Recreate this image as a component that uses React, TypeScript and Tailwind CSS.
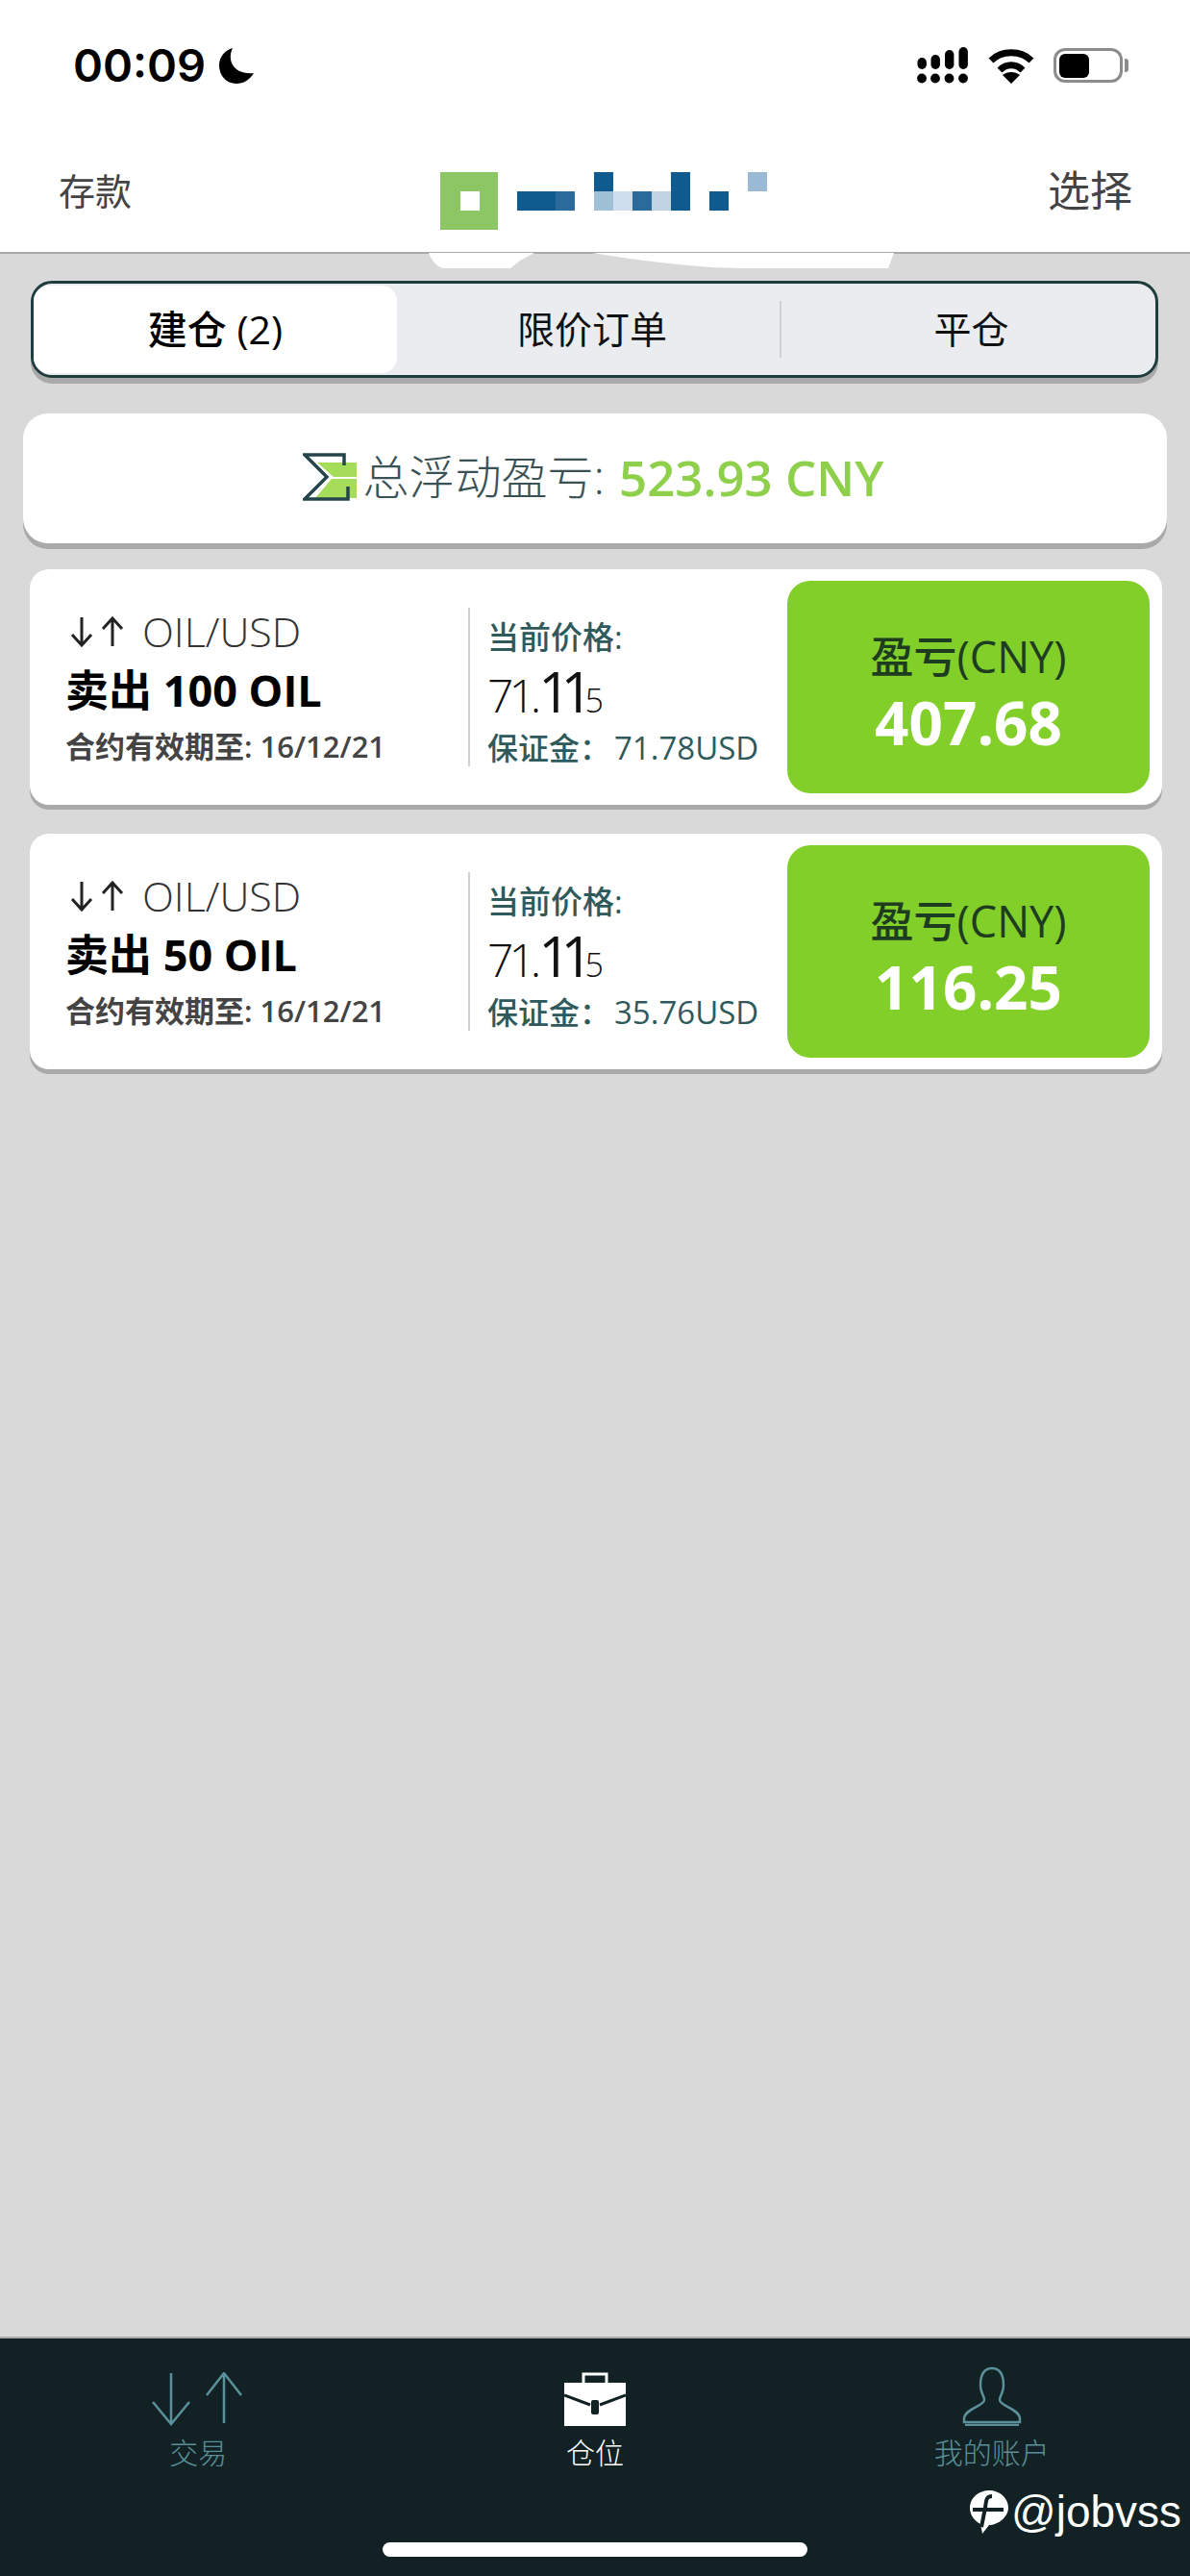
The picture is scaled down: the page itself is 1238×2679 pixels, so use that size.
import React from "react";

const positions = [
  { title: "卖出 100 OIL", margin: "71.78USD", pnl: "407.68" },
  { title: "卖出 50 OIL", margin: "35.76USD", pnl: "116.25" },
];

function SignalIcon() {
  return (
    <svg width="54" height="38" viewBox="0 0 54 38" fill="#000">
      <rect x="0.5" y="11" width="9.4" height="12" rx="4.7" />
      <rect x="14.5" y="8" width="9.4" height="15" rx="4.7" />
      <rect x="29" y="3" width="9.4" height="20" rx="4.7" />
      <rect x="43.5" y="0" width="9.4" height="23" rx="4.7" />
      <circle cx="5" cy="32.5" r="4.9" />
      <circle cx="19" cy="32.5" r="4.9" />
      <circle cx="33.5" cy="32.5" r="4.9" />
      <circle cx="48" cy="32.5" r="4.9" />
    </svg>
  );
}

function WifiIcon() {
  return (
    <svg width="48" height="37" viewBox="0 0 48 37" fill="none" stroke="#000" strokeWidth="7">
      <path d="M3 13 C14 2 34 2 45 13" />
      <path d="M12 23 C19 16 29 16 36 23" />
      <path d="M15 28 L24 37 L33 28 C28 24 20 24 15 28Z" fill="#000" stroke="none" />
    </svg>
  );
}

function BatteryIcon() {
  return (
    <div className="flex items-center gap-[2px]">
      <div className="flex h-[36px] w-[72px] items-center rounded-[12px] border-[3px] border-[#8c8c8c] pl-[3px]">
        <div className="h-[25px] w-[31px] rounded-[6px] bg-black" />
      </div>
      <div className="h-[14px] w-[4px] rounded-r-[3px] bg-[#8c8c8c]" />
    </div>
  );
}

function MoonIcon() {
  return (
    <svg width="37" height="37" viewBox="0 0 37 37" fill="#000">
      <path d="M14 0 C8 12 14 28 36 26 C32 33 25 37 18 37 C7 37 0 28 0 18 C0 9 6 2 14 0Z" />
    </svg>
  );
}

// Square brand mark followed by the blocky account name
function BrandMark() {
  const cells = [
    [80, 20, 40, 20, "#0f5a8f"],
    [120, 20, 20, 20, "#2a6b9c"],
    [160, 0, 20, 20, "#0f5a8f"],
    [160, 20, 20, 20, "#a0c0d8"],
    [180, 20, 20, 20, "#cfdeec"],
    [200, 20, 20, 20, "#2a6b9c"],
    [220, 20, 20, 20, "#c0d4e4"],
    [240, 0, 20, 40, "#0f5a8f"],
    [280, 20, 20, 20, "#0f5a8f"],
    [320, 0, 20, 20, "#9ab9d4"],
  ] as const;
  return (
    <svg width="340" height="60" viewBox="0 0 340 60">
      <rect width="60" height="60" fill="#8cc665" />
      <rect x="21" y="20" width="20" height="20" fill="#fff" />
      {cells.map(([x, y, w, h, c], i) => (
        <rect key={i} x={x} y={y} width={w} height={h} fill={c} />
      ))}
    </svg>
  );
}

function SigmaIcon() {
  return (
    <svg width="56" height="50" viewBox="0 0 56 50" className="shrink-0">
      <path d="M15 10 H56 V25 H32Z M30 27 H56 V47 H13Z" fill="#a5dc5a" />
      <path d="M43 13 V2 H2 L25 25 L2 48 H47 V35" fill="none" stroke="#23444a" strokeWidth="3.5" />
    </svg>
  );
}

function SmallArrows({ className }: { className: string }) {
  return (
    <svg viewBox="0 0 56 32" className={className} fill="none" stroke="#222" strokeWidth="3">
      <path d="M12 1 V30 M2 19 L12 30 L22 19" />
      <path d="M44 31 V2 M34 13 L44 2 L54 13" />
    </svg>
  );
}

function PositionCard({ title, margin, pnl }: { title: string; margin: string; pnl: string }) {
  return (
    <div className="flex h-[245px] items-stretch rounded-[20px] bg-white py-[12px] pr-[13px] shadow-[0_5px_0_#a9a9a9]">
      <div className="w-[456px] shrink-0 pl-[37px] pt-[31px]">
        <div className="flex h-[44px] items-center pl-[5px]">
          <SmallArrows className="h-[32px] w-[56px]" />
          <span className="ml-[19px] text-[43px] font-light leading-[44px] text-[#333]">OIL/USD</span>
        </div>
        <div className="mt-[14px] h-[50px] text-[45px] font-bold leading-[50px] text-black">{title}</div>
        <div className="mt-[13px] text-[31px] font-semibold leading-[40px] text-[#444]">合约有效期至: 16/12/21</div>
      </div>
      <div className="my-[28px] w-[2px] shrink-0 bg-[#cfcfcf]" />
      <div className="flex-1 pl-[18px] pt-[39px]">
        <div className="text-[33px] font-medium leading-[40px] text-[#2f5a5c]">当前价格:</div>
        <div className="mt-[8px] flex h-[56px] items-baseline leading-[56px] text-[#111]">
          <span className="text-[48px] font-light tracking-[-5px]">71.</span>
          <span className="ml-[2px] text-[58px] font-medium tracking-[-10px]">11</span>
          <span className="ml-[2px] text-[34px] font-light">5</span>
        </div>
        <div className="mt-[11px] flex items-center text-[33px] leading-[40px] text-[#2f5a5c]">
          <span className="w-[132px] text-[32px] font-medium">保证金：</span>
          <span className="font-normal">{margin}</span>
        </div>
      </div>
      <div className="flex w-[377px] shrink-0 flex-col items-center justify-center rounded-[24px] bg-[#82cf2a] pt-[8px]">
        <div className="text-[45px] font-medium leading-[54px] text-[#1e3d20]">盈亏(CNY)</div>
        <div className="mt-[10px] text-[62px] font-bold leading-[62px] text-white">{pnl}</div>
      </div>
    </div>
  );
}

function TradeIcon() {
  return (
    <svg width="96" height="56" viewBox="0 0 96 56" fill="none" stroke="#5b8f9a" strokeWidth="2.5">
      <path d="M20 1 V54 M1 31 L20 54 L39 31" />
      <path d="M75 53 V1 M57 24 L75 1 L93 24" />
    </svg>
  );
}

function BriefcaseIcon() {
  return (
    <svg width="64" height="56" viewBox="0 0 64 56">
      <path d="M20 11 V2 H44 V11" fill="none" stroke="#fff" strokeWidth="3" />
      <rect y="11" width="64" height="45" fill="#fff" />
      <path d="M0 24 L27 34 M64 24 L37 34" stroke="#122224" strokeWidth="3" />
      <rect x="28" y="29" width="8" height="15" rx="2" fill="#122224" />
    </svg>
  );
}

function PersonIcon() {
  return (
    <svg width="62" height="62" viewBox="0 0 62 62" fill="none" stroke="#5b8f9a" strokeWidth="2.5">
      <path d="M31 2 C21 2 19 11 19 20 C19 28 23 30 23 35 C23 41 3 44 2 54 L2 58 H60 L60 54 C59 44 39 41 39 35 C39 30 43 28 43 20 C43 11 41 2 31 2Z" />
      <path d="M3 61 H59" />
    </svg>
  );
}

function NavItem({ icon, label, active }: { icon: React.ReactNode; label: string; active?: boolean }) {
  return (
    <div className="flex flex-col items-center">
      <div className="flex h-[66px] items-end">{icon}</div>
      <div className={`mt-[10px] text-[30px] font-light leading-[36px] ${active ? "text-white" : "text-[#5a8f99]"}`}>
        {label}
      </div>
    </div>
  );
}

export default function App() {
  return (
    <div className="relative flex h-[2679px] w-[1238px] flex-col overflow-hidden bg-[#d9d9d9] font-['Open_Sans','Noto_Sans_CJK_SC',sans-serif]">
      <header className="h-[264px] shrink-0 border-b-2 border-[#a9a9a9] bg-white">
        <div className="flex items-center justify-between pl-[76px] pr-[64px] pt-[48px]">
          <div className="flex items-center gap-[14px]">
            <span className="font-['Inter',sans-serif] text-[47px] font-semibold leading-[40px] text-black">00:09</span>
            <MoonIcon />
          </div>
          <div className="flex items-center gap-[20px]">
            <SignalIcon />
            <WifiIcon />
            <BatteryIcon />
          </div>
        </div>
        <div className="mt-[60px] flex items-start justify-between pl-[61px] pr-[60px]">
          <span className="mt-[25px] text-[38px] font-normal leading-[50px] text-[#444]">存款</span>
          <div className="relative ml-[28px] mt-[31px]">
            <BrandMark />
            {/* white mask that runs past the header's lower edge */}
            <svg className="absolute left-[-12px] top-[84px]" width="490" height="20" viewBox="0 0 490 20" fill="#fff">
              <path d="M0 0 H484 L478 16 H330 C280 16 220 8 170 0 L110 0 L95 8 L85 16 H15 C8 14 3 8 0 0Z" />
            </svg>
          </div>
          <span className="mt-[22px] text-[44px] font-normal leading-[56px] text-[#444]">选择</span>
        </div>
      </header>

      <main className="flex-1">
        <div className="ml-[32px] mt-[28px] flex h-[101px] w-[1173px] items-stretch rounded-[22px] border-[3px] border-[#1f3d3f] bg-[#ebecef] shadow-[0_6px_0_#a9a9a9]">
          <div className="my-[2px] flex w-[378px] items-center justify-center rounded-[16px] bg-white text-[41px] font-medium text-black">
            建仓 (2)
          </div>
          <div className="flex w-[398px] items-center justify-center pl-[8px] text-[39px] font-normal text-[#111]">
            限价订单
          </div>
          <div className="my-[18px] w-[2px] bg-[#cfd0d3]" />
          <div className="flex flex-1 items-center justify-center pl-[6px] text-[39px] font-normal text-[#111]">平仓</div>
        </div>

        <div className="ml-[24px] mt-[37px] flex h-[135px] w-[1190px] items-center justify-center rounded-[26px] bg-white pb-[3px] pr-[4px] shadow-[0_6px_0_#a9a9a9]">
          <SigmaIcon />
          <span className="ml-[7px] text-[48px] font-light leading-[60px] text-[#3a5256]">总浮动盈亏:</span>
          <span className="ml-[15px] text-[51px] font-semibold leading-[60px] text-[#8ed04b]">523.93 CNY</span>
        </div>

        <div className="ml-[31px] mt-[27px] flex w-[1178px] flex-col gap-[30px]">
          {positions.map((p) => (
            <PositionCard key={p.title} {...p} />
          ))}
        </div>
      </main>

      <footer className="h-[249px] shrink-0 border-t-2 border-[#a9a9a9] bg-[#122224]">
        <div className="grid grid-cols-3 pt-[25px]">
          <NavItem icon={<TradeIcon />} label="交易" />
          <NavItem icon={<BriefcaseIcon />} label="仓位" active />
          <NavItem icon={<PersonIcon />} label="我的账户" />
        </div>
        <div className="mx-auto mt-[75px] h-[15px] w-[442px] rounded-full bg-white" />
      </footer>

      {/* account tag laid over the tab bar */}
      <div className="absolute left-[1008px] top-[2588px] flex items-center gap-[2px]">
        <svg width="42" height="48" viewBox="0 0 42 48">
          <path d="M21 2 C32 2 41 10 41 20 C41 30 30 38 21 38 L14 47 L12 37 C5 33 1 27 1 20 C1 10 10 2 21 2Z" fill="#fff" />
          <path d="M4 22 H36 M24 8 C18 8 18 12 17 20 L13 40" fill="none" stroke="#122224" strokeWidth="4" />
        </svg>
        <span className="font-['Liberation_Sans',sans-serif] text-[46px] leading-[48px] text-white">@jobvss</span>
      </div>
    </div>
  );
}
